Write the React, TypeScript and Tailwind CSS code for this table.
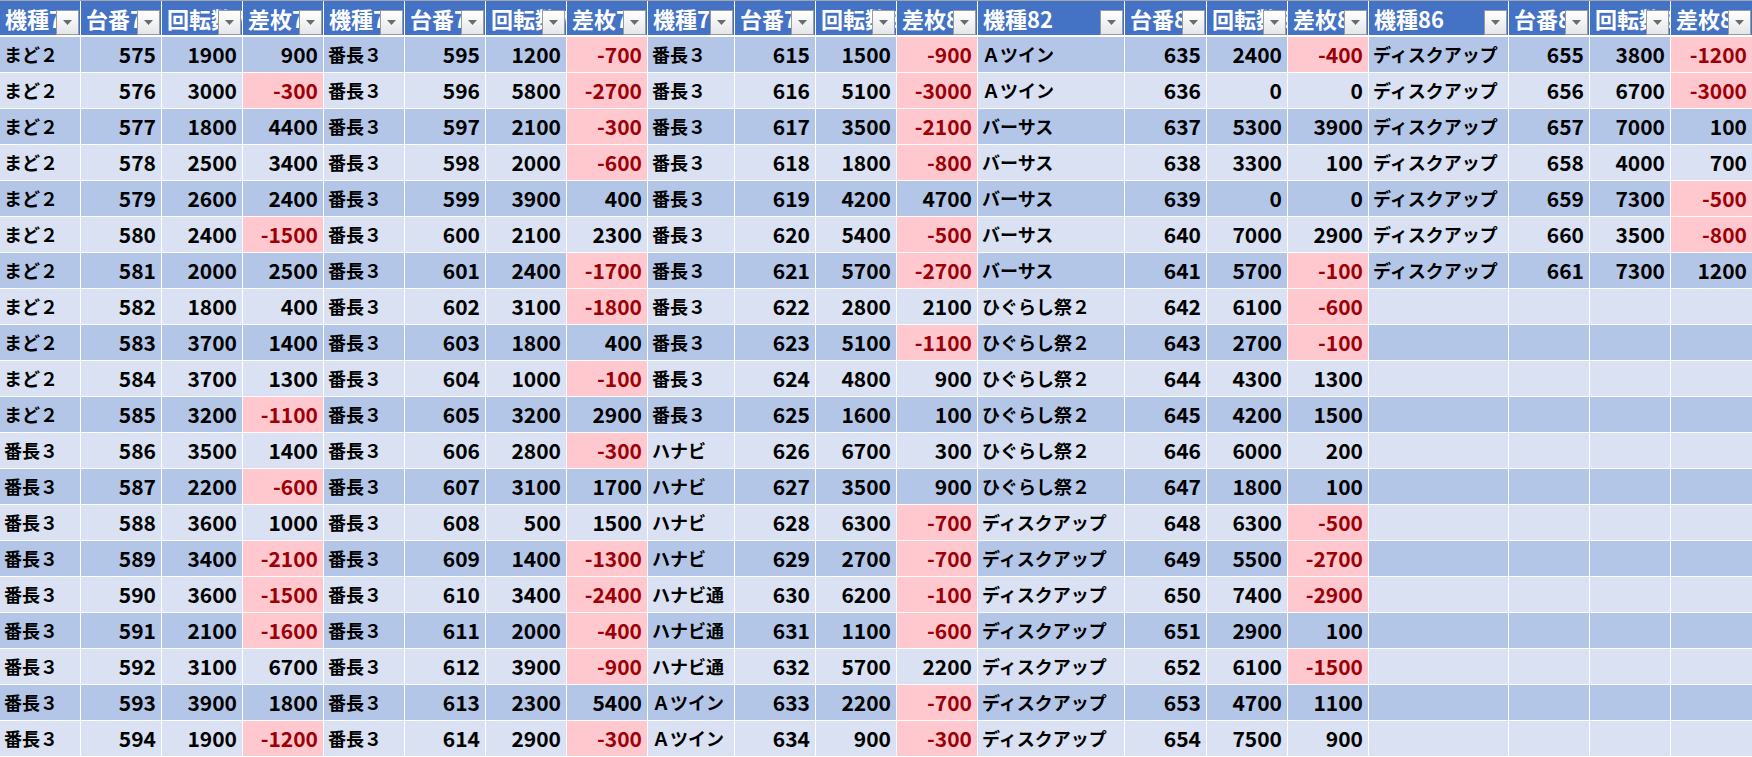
const headers = [
  '機種70', '台番71', '回転数72', '差枚73',
  '機種74', '台番75', '回転数76', '差枚77',
  '機種78', '台番79', '回転数80', '差枚81',
  '機種82', '台番83', '回転数84', '差枚85',
  '機種86', '台番87', '回転数88', '差枚89',
];

type Row = [string, number, number, number] | null;

function repeat(name: string, n: number) {
  return Array.from({ length: n }, () => name);
}

function group(start: number, names: string[], spins: number[], diffs: number[]): Row[] {
  return Array.from({ length: 20 }, (_, i) =>
    i < names.length ? [names[i], start + i, spins[i], diffs[i]] : null
  );
}

const groups: Row[][] = [
  group(
    575,
    [...repeat('まど２', 11), ...repeat('番長３', 9)],
    [1900, 3000, 1800, 2500, 2600, 2400, 2000, 1800, 3700, 3700, 3200, 3500, 2200, 3600, 3400, 3600, 2100, 3100, 3900, 1900],
    [900, -300, 4400, 3400, 2400, -1500, 2500, 400, 1400, 1300, -1100, 1400, -600, 1000, -2100, -1500, -1600, 6700, 1800, -1200]
  ),
  group(
    595,
    repeat('番長３', 20),
    [1200, 5800, 2100, 2000, 3900, 2100, 2400, 3100, 1800, 1000, 3200, 2800, 3100, 500, 1400, 3400, 2000, 3900, 2300, 2900],
    [-700, -2700, -300, -600, 400, 2300, -1700, -1800, 400, -100, 2900, -300, 1700, 1500, -1300, -2400, -400, -900, 5400, -300]
  ),
  group(
    615,
    [...repeat('番長３', 11), ...repeat('ハナビ', 4), ...repeat('ハナビ通', 3), ...repeat('Ａツイン', 2)],
    [1500, 5100, 3500, 1800, 4200, 5400, 5700, 2800, 5100, 4800, 1600, 6700, 3500, 6300, 2700, 6200, 1100, 5700, 2200, 900],
    [-900, -3000, -2100, -800, 4700, -500, -2700, 2100, -1100, 900, 100, 300, 900, -700, -700, -100, -600, 2200, -700, -300]
  ),
  group(
    635,
    [...repeat('Ａツイン', 2), ...repeat('バーサス', 5), ...repeat('ひぐらし祭２', 6), ...repeat('ディスクアップ', 7)],
    [2400, 0, 5300, 3300, 0, 7000, 5700, 6100, 2700, 4300, 4200, 6000, 1800, 6300, 5500, 7400, 2900, 6100, 4700, 7500],
    [-400, 0, 3900, 100, 0, 2900, -100, -600, -100, 1300, 1500, 200, 100, -500, -2700, -2900, 100, -1500, 1100, 900]
  ),
  group(
    655,
    repeat('ディスクアップ', 7),
    [3800, 6700, 7000, 4000, 7300, 3500, 7300],
    [-1200, -3000, 100, 700, -500, -800, 1200]
  ),
];

function FilterButton() {
  return (
    <div className="absolute right-px bottom-0 w-[23px] h-[25px] flex items-center justify-center border border-[#9a9a9a] bg-gradient-to-b from-white to-[#e4e6ea]">
      <svg width="9" height="5" viewBox="0 0 9 5">
        <path d="M0 0h9L4.5 5z" fill="#6b6b6b" />
      </svg>
    </div>
  );
}

export default function App() {
  const rows = Array.from({ length: 20 }, (_, r) => r);

  return (
    <div className="w-[1752px] h-[757px] overflow-hidden bg-white border-t border-[#a4a7ab] font-['Noto_Sans_CJK_JP',sans-serif]">
      <div className="grid grid-cols-[80px_80px_80px_80px_80px_80px_80px_80px_86px_80px_80px_80px_146px_81px_80px_80px_139px_80px_80px_81px] gap-px bg-white">
        {/* Header */}
        {headers.map(h => (
          <div
            key={h}
            className="relative h-[34px] mb-px bg-[#4472c4] overflow-hidden whitespace-nowrap pl-[5px] text-white text-[22px] font-bold leading-[34px]"
          >
            {h}
            <FilterButton />
          </div>
        ))}

        {/* Body */}
        {rows.map(r => {
          const bg = r % 2 === 0 ? 'bg-[#b4c6e7]' : 'bg-[#d9e1f2]';
          return groups.map((g, gi) => {
            const row = g[r];
            const neg = row !== null && row[3] < 0;
            return [
              <div
                key={`${r}-${gi}-a`}
                className={`h-[35px] ${bg} pl-[4px] flex items-center whitespace-nowrap text-[18px] font-bold text-black`}
              >
                {row?.[0]}
              </div>,
              <div
                key={`${r}-${gi}-b`}
                className={`h-[35px] ${bg} pr-[5px] flex items-center justify-end text-[21px] font-bold text-black`}
              >
                {row?.[1]}
              </div>,
              <div
                key={`${r}-${gi}-c`}
                className={`h-[35px] ${bg} pr-[5px] flex items-center justify-end text-[21px] font-bold text-black`}
              >
                {row?.[2]}
              </div>,
              <div
                key={`${r}-${gi}-d`}
                className={`h-[35px] pr-[5px] flex items-center justify-end text-[21px] font-bold ${
                  neg ? 'bg-[#ffc7ce] text-[#9c0006]' : `${bg} text-black`
                }`}
              >
                {row?.[3]}
              </div>,
            ];
          });
        })}
      </div>
    </div>
  );
}
